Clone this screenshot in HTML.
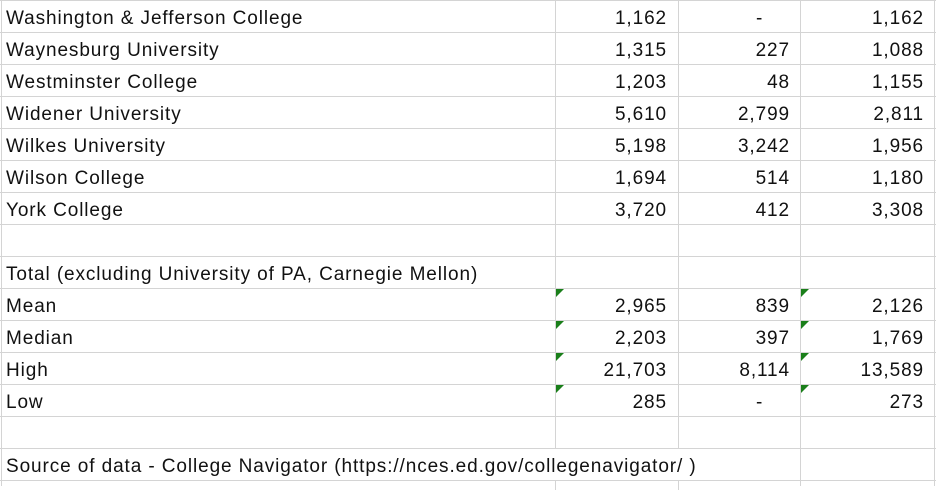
<!DOCTYPE html>
<html><head><style>
body{margin:0;width:936px;height:486px;background:#fff;position:relative;overflow:hidden;font-family:"Liberation Sans",Arial,sans-serif;font-size:19px;letter-spacing:0.9px;color:#111}
.h{position:absolute;left:0;width:936px;height:1px;background:#d4d4d4}
.v{position:absolute;width:1px;background:#d4d4d4}
.t{position:absolute;height:32px;line-height:33px;white-space:nowrap}
.r{text-align:right}
.g{position:absolute;width:0;height:0;border-top:8px solid #1a7f1a;border-right:8px solid transparent}
</style></head><body>
<div id="g"></div>
<script>
var s='';
for(var i=0;i<=15;i++)s+='<div class="h" style="top:'+(i*32)+'px"></div>';
s+='<div class="v" style="left:1px;top:0;height:486px"></div>';
s+='<div class="v" style="left:934px;top:0;height:486px"></div>';
s+='<div class="v" style="left:800px;top:0;height:486px"></div>';
s+='<div class="v" style="left:555px;top:0;height:448px"></div><div class="v" style="left:555px;top:480px;height:10px"></div>';
s+='<div class="v" style="left:678px;top:0;height:448px"></div><div class="v" style="left:678px;top:480px;height:10px"></div>';
var rows=[["Washington & Jefferson College","1,162","-","1,162"],["Waynesburg University","1,315","227","1,088"],["Westminster College","1,203","48","1,155"],["Widener University","5,610","2,799","2,811"],["Wilkes University","5,198","3,242","1,956"],["Wilson College","1,694","514","1,180"],["York College","3,720","412","3,308"],["","","",""],["Total (excluding University of PA, Carnegie Mellon)","","",""],["Mean","2,965","839","2,126",1],["Median","2,203","397","1,769",1],["High","21,703","8,114","13,589",1],["Low","285","-","273",1],["","","",""],["Source of data - College Navigator (https://nces.ed.gov/collegenavigator/ )","","",""]];
rows.forEach(function(r,i){var y=i*32+2;
s+='<div class="t" style="left:6px;top:'+y+'px">'+r[0].replace('&','&amp;')+'</div>';
var c2=r[2]=='-'?'<div class="t" style="left:756px;top:'+y+'px">-</div>':'<div class="t r" style="right:146px;top:'+y+'px">'+r[2]+'</div>';
if(r[1])s+='<div class="t r" style="right:269px;top:'+y+'px">'+r[1]+'</div>';
if(r[2])s+=c2;
if(r[3])s+='<div class="t r" style="right:12px;top:'+y+'px">'+r[3]+'</div>';
if(r[4])s+='<div class="g" style="left:556px;top:'+(y-1)+'px"></div><div class="g" style="left:801px;top:'+(y-1)+'px"></div>';
});
document.getElementById('g').innerHTML=s;
</script>
</body></html>
